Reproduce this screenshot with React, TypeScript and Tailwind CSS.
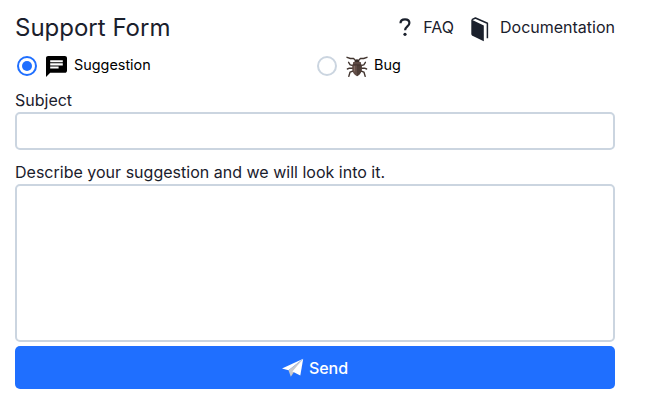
import React from "react";

function ChatIcon() {
  return (
    <svg viewBox="2 2 20 20" className="h-[21px] w-[21px]" fill="#000">
      <path d="M20 2H4c-1.1 0-1.99.9-1.99 2L2 22l4-4h14c1.1 0 2-.9 2-2V4c0-1.1-.9-2-2-2zM6 9h12v2H6V9zm8 5H6v-2h8v2zm4-6H6V6h12v2z" />
    </svg>
  );
}

function BugIcon() {
  return (
    <svg viewBox="0 0 22 22" className="h-[22px] w-[22px]" fill="none">
      <g stroke="#42352f" strokeWidth="1.4" strokeLinecap="round" strokeLinejoin="round">
        <path d="M9.500 4.600 7.600 2.500 4.400 2.500 1 1.300M12.500 4.600l1.900-2.100h3.200L21 1.300" />
        <path d="M7 9.500 4.200 8.900 2.600 6.300M15 9.500l2.800-.6 1.600-2.600" />
        <path d="M7 12.200H3.400L1.400 13M15 12.200h3.600l2 .8" />
        <path d="M7.200 15 4 16.200 2.800 20.400M14.800 15l3.200 1.200 1.200 4.200" />
      </g>
      <path d="M8.600 5.400Q8.700 3.300 11 3.300t2.400 2.100L13 7H9z" fill="#392d29" />
      <path d="M7.200 5.900h7.600l.5 3.200H6.700z" fill="#5d4a44" />
      <path d="M6.500 8.800h9c.9 4.900-.1 9.300-4.500 11.500-4.400-2.200-5.400-6.600-4.500-11.500z" fill="#604c46" />
      <path d="M11 9v11.300c4.400-2.200 5.400-6.600 4.500-11.300z" fill="#4d3d37" />
      <path d="M8.500 9.800v5.600" stroke="#806a61" strokeWidth="1.200" />
      <path d="M7 8.900h8" stroke="#382a26" strokeWidth=".7" />
    </svg>
  );
}

function BookIcon() {
  return (
    <svg viewBox="0 0 18 25" className="h-[25px] w-[18px]" fill="none">
      <path d="M.3 2.600 12.800 8.500V24.200L1.400 18.700Q.3 18.100.3 16.900z" fill="#1a202c" />
      <path d="M.9 2.700 4.400 1 16.400 6.300V21.200" stroke="#1a202c" strokeWidth="1.500" strokeLinejoin="round" />
    </svg>
  );
}

function QuestionIcon() {
  return (
    <svg viewBox="0 0 12 19" className="h-[19px] w-3" fill="none">
      <path d="M1.500 5.300C1.500 2.800 3.300 1.300 6 1.300s4.400 1.400 4.400 3.700c0 3.300-4.300 3.500-4.300 7.300" stroke="#1a202c" strokeWidth="2.200" />
      <circle cx="6" cy="16.300" r="1.600" fill="#1a202c" />
    </svg>
  );
}

function PlaneIcon() {
  return (
    <svg viewBox="0 0 22 20" className="h-5 w-[22px]">
      <path d="M21.200.7 0 10.500 6.500 12.300z" fill="#fff" />
      <path d="M21.200.7 6.500 12.300 8.800 18.700z" fill="#c9cacd" />
      <path d="M21.200.7 8.800 18.700l2.700-4.300z" fill="#71757d" />
      <path d="M21.200.7 10.400 13.600 18.300 17.600z" fill="#fff" />
    </svg>
  );
}

function Radio({ checked }: { checked?: boolean }) {
  return (
    <span
      className={
        "flex h-5 w-5 items-center justify-center rounded-full border-2 bg-white " +
        (checked ? "border-[#1f6fff]" : "border-[#cbd5e0]")
      }
    >
      {checked && <span className="h-2.5 w-2.5 rounded-full bg-[#1f6fff]" />}
    </span>
  );
}

export default function App() {
  return (
    <div className="h-[400px] w-[645px] bg-white pl-[15px] pt-2 font-[Inter,sans-serif] text-base text-[#1a202c]">
      <form className="flex w-[600px] flex-col" onSubmit={(e) => e.preventDefault()}>
        <header className="flex h-10 items-center justify-between">
          <h1 className="text-2xl">Support Form</h1>
          <nav className="flex items-center pb-0.5">
            <QuestionIcon />
            <span className="ml-3">FAQ</span>
            <span className="ml-[17px] mt-1"><BookIcon /></span>
            <span className="ml-[11px]">Documentation</span>
          </nav>
        </header>
        <div className="grid h-9 grid-cols-2 items-center text-[14.4px] leading-5 text-black">
          <label className="flex h-6 items-center pl-0.5">
            <Radio checked />
            <span className="ml-[9px] pt-px"><ChatIcon /></span>
            <span className="ml-[7px] pb-0.5">Suggestion</span>
          </label>
          <label className="flex h-6 items-center pl-0.5">
            <Radio />
            <span className="ml-[9px] pt-px"><BugIcon /></span>
            <span className="ml-1.5 pb-0.5">Bug</span>
          </label>
        </div>
        <label className="mt-1 h-6 leading-6" htmlFor="subject">Subject</label>
        <input id="subject" className="h-[38px] rounded-[5px] border-2 border-[#cbd5e0] px-3 outline-none" />
        <label className="mt-2.5 h-6 leading-6 tracking-[0.01px]" htmlFor="details">
          Describe your suggestion and we will look into it.
        </label>
        <textarea id="details" className="h-[158px] resize-none rounded-[5px] border-2 border-[#cbd5e0] px-3 outline-none" />
        <button className="mt-1 flex h-[43px] items-center justify-center rounded-[5px] bg-[#1f6fff] font-medium text-white">
          <PlaneIcon />
          <span className="ml-[5px]">Send</span>
        </button>
      </form>
    </div>
  );
}
